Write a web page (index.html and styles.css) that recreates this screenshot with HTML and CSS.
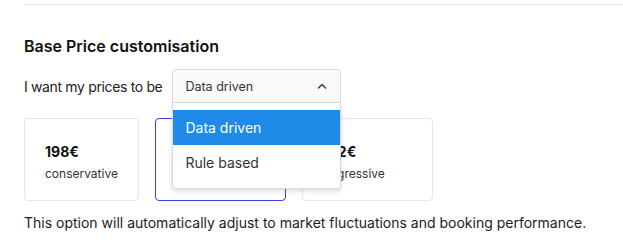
FILE: index.html
```html
<!DOCTYPE html>
<html lang="en">
<head>
  <meta charset="UTF-8" />
  <title>Base Price customisation</title>
  <link rel="stylesheet" href="styles.css">
</head>
<body>

  <!-- Pricing settings -->
  <section class="pricing">
    <h2 class="pricing-title">Base Price customisation</h2>

    <div class="select-row">
      <span class="select-label">I want my prices to be</span>
      <div class="select">
        <div class="select-box">
          <span>Data driven</span>
          <svg class="chevron" width="10" height="6" viewBox="0 0 10 6">
            <path d="M1.5 5 L5 1.5 L8.5 5" fill="none" stroke="#333" stroke-width="1.4" stroke-linecap="round" stroke-linejoin="round"/>
          </svg>
        </div>
        <ul class="select-menu">
          <li class="option selected">Data driven</li>
          <li class="option">Rule based</li>
        </ul>
      </div>
    </div>

    <div class="cards">
      <div class="card card-small">
        <div class="price">198€</div>
        <div class="tag">conservative</div>
      </div>
      <div class="card card-active">
        <div class="price">205€</div>
        <div class="tag">recommended</div>
      </div>
      <div class="card">
        <div class="price">212€</div>
        <div class="tag">aggressive</div>
      </div>
    </div>

    <p class="note">This option will automatically adjust to market fluctuations and booking performance.</p>
  </section>

</body>
</html>
```

FILE: styles.css
```css
html, body {
  margin: 0;
  padding: 0;
  background: #fff;
  color: #1c1c1c;
  font-family: 'Inter', 'Noto Sans', sans-serif;
}

body {
  padding: 4px 0 0 24px;
}

.pricing {
  border-top: 1px solid #dfe3e7;
}

.pricing-title {
  margin: 29px 0 0;
  font-size: 16px;
  line-height: 24px;
  font-weight: 600;
  color: #111;
}

.select-row {
  display: flex;
  align-items: center;
  margin-top: 11px;
}

.select-label {
  font-size: 14px;
  letter-spacing: -0.35px;
  color: #222;
  margin-right: 10px;
}

.select {
  position: relative;
  width: 169px;
}

.select-box {
  display: flex;
  align-items: center;
  justify-content: space-between;
  height: 32px;
  padding: 0 13px 0 12px;
  border: 1px solid #dadada;
  border-radius: 4px 4px 0 0;
  background: #fafafa;
  font-size: 12.5px;
  color: #333;
}

.select-menu {
  position: absolute;
  top: 100%;
  left: 0;
  right: 0;
  z-index: 5;
  margin: 0;
  padding: 7px 0 8px;
  list-style: none;
  background: #fff;
  border: 1px solid #dadada;
  border-top: none;
  border-radius: 0 0 4px 4px;
  box-shadow: 0 2px 5px rgba(0, 0, 0, 0.15);
}

.option {
  height: 35px;
  line-height: 35px;
  padding: 0 12px;
  font-size: 14px;
  color: #333;
}

.option.selected {
  background: #1f8ae8;
  color: #fff;
}

.cards {
  display: flex;
  gap: 16px;
  margin-top: 15px;
}

.card {
  box-sizing: border-box;
  width: 131px;
  height: 83px;
  padding: 24px 20px 0;
  border: 1px solid #e6e6e6;
  border-radius: 4px;
}

.card-small {
  width: 115px;
}

.card-active {
  border-color: #3d3df0;
}

.price {
  font-size: 14px;
  font-weight: 700;
  color: #111;
}

.tag {
  margin-top: 6px;
  font-size: 12px;
  color: #333;
}

.note {
  margin: 12px 0 0;
  font-size: 14px;
  line-height: 20px;
  color: #1c1c1c;
}
```
